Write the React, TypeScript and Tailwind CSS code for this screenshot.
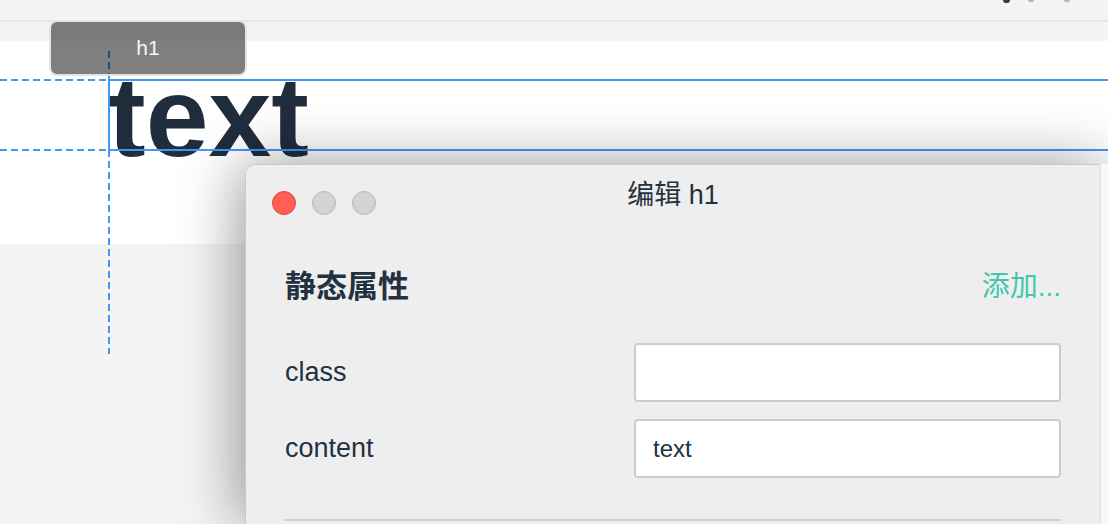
import React from 'react';

const font = "font-['Liberation_Sans','Noto_Sans_CJK_SC',sans-serif]";

function TrafficLights() {
  return (
    <div className="flex gap-[16px] mt-[26px]">
      <span className="w-[24px] h-[24px] rounded-full bg-[#ff5f57] border border-[#e2463f]" />
      <span className="w-[24px] h-[24px] rounded-full bg-[#d3d3d3] border border-[#b9b9b9]" />
      <span className="w-[24px] h-[24px] rounded-full bg-[#d3d3d3] border border-[#b9b9b9]" />
    </div>
  );
}

function FieldRow({ label, value }: { label: string; value: string }) {
  return (
    <div className="flex items-center h-[59px]">
      <label className="flex-1 text-[27px] text-[#233140]">{label}</label>
      <input
        type="text"
        readOnly
        value={value}
        className="w-[427px] h-[59px] border-2 border-[#cccccc] rounded-[4px] bg-white px-[17px] text-[24px] text-[#233140] outline-none"
      />
    </div>
  );
}

export default function App() {
  return (
    <div className={`relative w-[1108px] h-[524px] overflow-hidden bg-[#f4f4f4] ${font}`}>
      {/* top toolbar, icons cut off at the top */}
      <div className="h-[21px] border-b border-[#e3e3e3] shadow-[0_1px_2px_rgba(0,0,0,0.05)] flex justify-end items-start pr-[38px]">
        <span className="w-[7px] h-[3px] rounded-b-full bg-[#3a3a3a]" />
        <span className="ml-[18px] w-[6px] h-[2px] rounded-b-full bg-[#b5b5b5]" />
        <span className="ml-[30px] w-[6px] h-[2px] rounded-b-full bg-[#b5b5b5]" />
      </div>
      <div className="h-[20px]" />

      {/* canvas */}
      <div className="bg-white h-[203px] pt-[38px]">
        <h1 className="ml-[108px] w-[1100px] h-[72px] pt-[4px] leading-[68px] text-[113px] font-bold text-[#1f2d3d] outline-2 outline-[#4299f5] -outline-offset-2">
          text
        </h1>
      </div>

      {/* guide lines */}
      <svg className="absolute inset-0 pointer-events-none" width="1108" height="524">
        <line x1="109" y1="51" x2="109" y2="354" stroke="#4299f5" strokeWidth="2" strokeDasharray="7 4" />
        <line x1="0" y1="80" x2="108" y2="80" stroke="#4299f5" strokeWidth="2" strokeDasharray="7 4" />
        <line x1="0" y1="150" x2="108" y2="150" stroke="#4299f5" strokeWidth="2" strokeDasharray="7 4" />
      </svg>

      {/* element tag */}
      <div className="absolute left-[49px] top-[20px] w-[198px] h-[56px] rounded-[8px] border-2 border-[#e4e4e4] bg-[rgba(0,0,0,0.5)] flex items-center justify-center">
        <span className="text-[21px] leading-none text-[#f5f5f5] -mt-[2px]">h1</span>
      </div>

      {/* edit dialog */}
      <div className="absolute left-[245px] top-[164px] right-0 bottom-0 flex rounded-tl-[10px] shadow-[-6px_0_60px_rgba(0,0,0,0.4)]">
        <div className="flex-1 bg-[#eeeeee] border-t border-l border-r border-[#c9c9c9] border-r-[#dcdcdc] rounded-tl-[10px]">
          <div className="grid grid-cols-[1fr_auto_1fr] h-[78px] px-[26px]">
            <TrafficLights />
            <div className="mt-[14px] leading-[32px] text-[27px] text-[#233140]">编辑 h1</div>
            <div />
          </div>
          <div className="px-[39px]">
            <div className="mt-[26px] flex items-center justify-between h-[36px]">
              <span className="text-[31px] font-bold text-[#233140]">静态属性</span>
              <span className="text-[28px] text-[#41c7b0]">添加...</span>
            </div>
            <div className="mt-[38px] flex flex-col gap-[17px]">
              <FieldRow label="class" value="" />
              <FieldRow label="content" value="text" />
            </div>
            <div className="mt-[41px] h-[2px] bg-[#cfcfcf]" />
          </div>
        </div>
        <div className="w-[7px] bg-[#f8f8f8]" />
      </div>
    </div>
  );
}
